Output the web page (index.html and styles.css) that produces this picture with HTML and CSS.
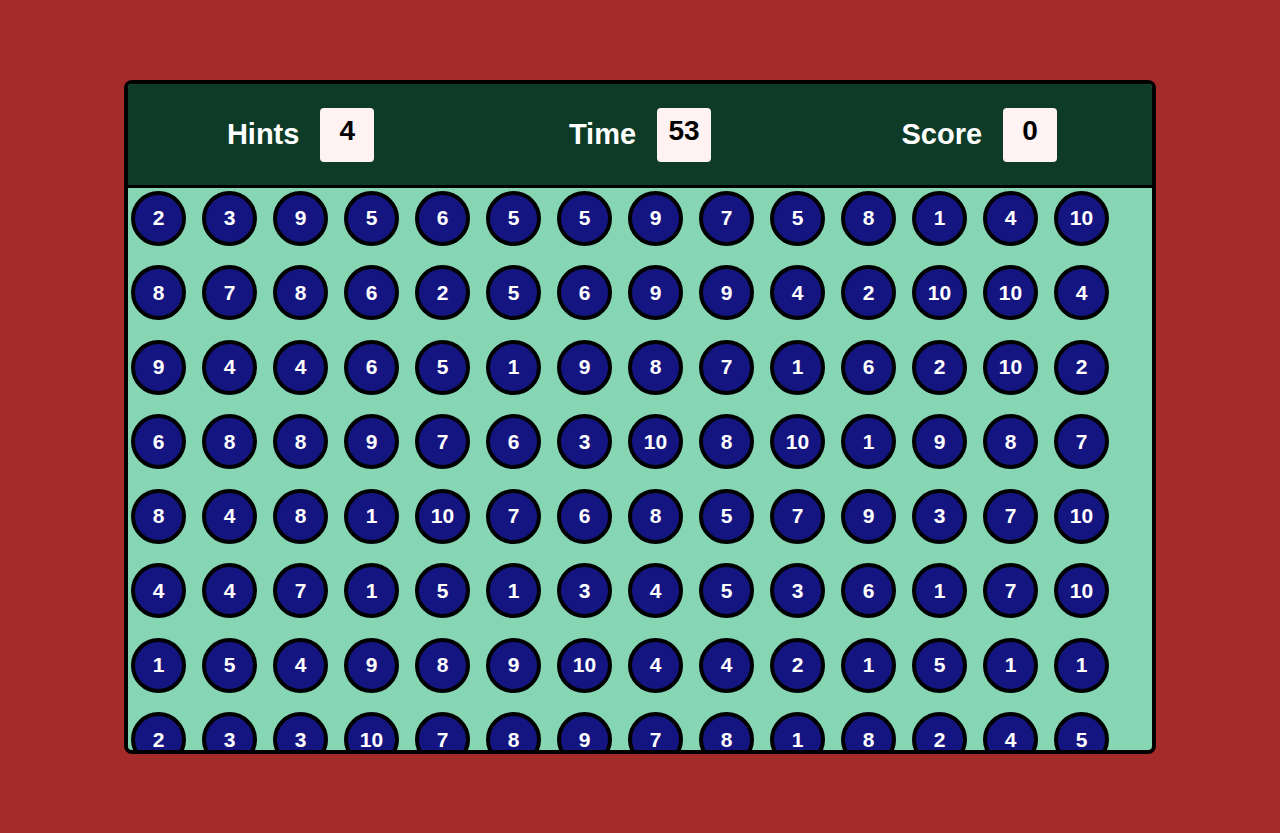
FILE: index.html
```html
<!DOCTYPE html>
<html>
<head>
<meta charset="utf-8">
<link rel="stylesheet" href="styles.css">
</head>
<body>
<div class="game">
  <div class="header">
    <div class="stat"><span class="label">Hints</span><span class="value">4</span></div>
    <div class="stat"><span class="label">Time</span><span class="value">53</span></div>
    <div class="stat"><span class="label">Score</span><span class="value">0</span></div>
  </div>
  <div class="board">
    <div class="ball">2</div><div class="ball">3</div><div class="ball">9</div><div class="ball">5</div><div class="ball">6</div><div class="ball">5</div><div class="ball">5</div><div class="ball">9</div><div class="ball">7</div><div class="ball">5</div><div class="ball">8</div><div class="ball">1</div><div class="ball">4</div><div class="ball">10</div>
    <div class="ball">8</div><div class="ball">7</div><div class="ball">8</div><div class="ball">6</div><div class="ball">2</div><div class="ball">5</div><div class="ball">6</div><div class="ball">9</div><div class="ball">9</div><div class="ball">4</div><div class="ball">2</div><div class="ball">10</div><div class="ball">10</div><div class="ball">4</div>
    <div class="ball">9</div><div class="ball">4</div><div class="ball">4</div><div class="ball">6</div><div class="ball">5</div><div class="ball">1</div><div class="ball">9</div><div class="ball">8</div><div class="ball">7</div><div class="ball">1</div><div class="ball">6</div><div class="ball">2</div><div class="ball">10</div><div class="ball">2</div>
    <div class="ball">6</div><div class="ball">8</div><div class="ball">8</div><div class="ball">9</div><div class="ball">7</div><div class="ball">6</div><div class="ball">3</div><div class="ball">10</div><div class="ball">8</div><div class="ball">10</div><div class="ball">1</div><div class="ball">9</div><div class="ball">8</div><div class="ball">7</div>
    <div class="ball">8</div><div class="ball">4</div><div class="ball">8</div><div class="ball">1</div><div class="ball">10</div><div class="ball">7</div><div class="ball">6</div><div class="ball">8</div><div class="ball">5</div><div class="ball">7</div><div class="ball">9</div><div class="ball">3</div><div class="ball">7</div><div class="ball">10</div>
    <div class="ball">4</div><div class="ball">4</div><div class="ball">7</div><div class="ball">1</div><div class="ball">5</div><div class="ball">1</div><div class="ball">3</div><div class="ball">4</div><div class="ball">5</div><div class="ball">3</div><div class="ball">6</div><div class="ball">1</div><div class="ball">7</div><div class="ball">10</div>
    <div class="ball">1</div><div class="ball">5</div><div class="ball">4</div><div class="ball">9</div><div class="ball">8</div><div class="ball">9</div><div class="ball">10</div><div class="ball">4</div><div class="ball">4</div><div class="ball">2</div><div class="ball">1</div><div class="ball">5</div><div class="ball">1</div><div class="ball">1</div>
    <div class="ball">2</div><div class="ball">3</div><div class="ball">3</div><div class="ball">10</div><div class="ball">7</div><div class="ball">8</div><div class="ball">9</div><div class="ball">7</div><div class="ball">8</div><div class="ball">1</div><div class="ball">8</div><div class="ball">2</div><div class="ball">4</div><div class="ball">5</div>
  </div>
</div>
</body>
</html>
```
FILE: styles.css
```css
html, body {
  margin: 0;
  padding: 0;
}
body {
  background: #a52a2a;
  height: 100vh;
  display: flex;
  align-items: center;
  justify-content: center;
  font-family: "Liberation Sans", Arial, sans-serif;
}
.game {
  width: 1024px;
  height: 666px;
  border: 4px solid #000;
  border-radius: 8px;
  overflow: hidden;
  display: flex;
  flex-direction: column;
  background: #86d5b3;
}
.header {
  height: 101px;
  flex: none;
  background: #0e3b28;
  border-bottom: 3px solid #000;
  display: flex;
  align-items: center;
  padding: 0 3px;
}
.stat {
  flex: 1;
  display: flex;
  align-items: center;
  justify-content: center;
  gap: 21px;
}
.label {
  color: #fff;
  font-weight: bold;
  font-size: 29px;
}
.value {
  box-sizing: border-box;
  width: 54px;
  height: 54px;
  padding-top: 7px;
  background: #fff2f2;
  border-radius: 4px;
  color: #000;
  font-weight: bold;
  font-size: 28px;
  text-align: center;
  margin-top: 2px;
}
.board {
  flex: 1;
  overflow: hidden;
  padding: 3px 0 0 3px;
  display: grid;
  grid-template-columns: repeat(14, 55px);
  grid-auto-rows: 55px;
  column-gap: 16px;
  row-gap: 19.5px;
  align-content: start;
}
.ball {
  box-sizing: border-box;
  width: 55px;
  height: 55px;
  border: 4px solid #000;
  border-radius: 50%;
  background: #151582;
  color: #fff;
  font-weight: bold;
  font-size: 21px;
  display: flex;
  align-items: center;
  justify-content: center;
}
```
